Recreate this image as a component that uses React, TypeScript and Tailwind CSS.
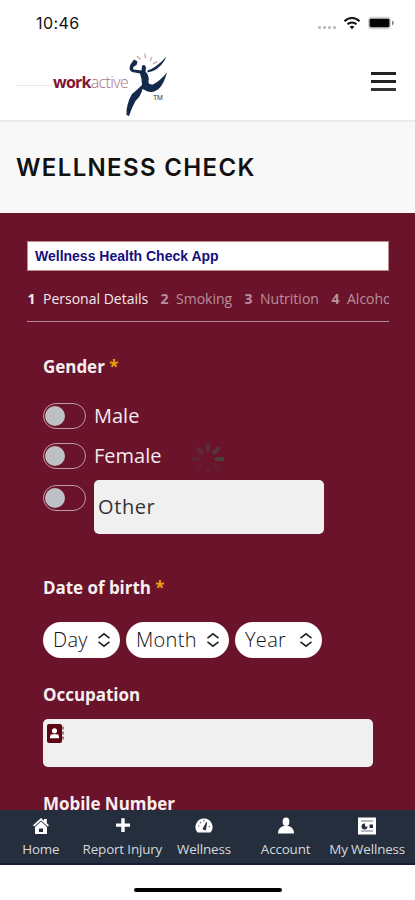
import type { ReactNode } from 'react';

const STEPS = [
  { n: 1, label: 'Personal Details', width: 'w-[133px]', active: true },
  { n: 2, label: 'Smoking', width: 'w-[84px]', active: false },
  { n: 3, label: 'Nutrition', width: 'w-[87px]', active: false },
  { n: 4, label: 'Alcohol', width: 'w-[86px]', active: false },
];

const SPOKES = [0.9, 0.2, 0.2, 0.2, 0.3, 0.5, 0.6, 0.75];

function StatusBar() {
  return (
    <div className="flex h-[45px] items-center pl-[36px] pr-[20px]">
      <span className="flex-1 font-['Inter',sans-serif] text-[16px] leading-5 tracking-[0.4px] text-[#111]">10:46</span>
      <svg className="mr-[6px] mt-[9px]" width="20" height="5" viewBox="0 0 20 5" fill="#b5b5b5">
        <circle cx="2.5" cy="2.5" r="1.5" />
        <circle cx="7.5" cy="2.5" r="1.5" />
        <circle cx="12.5" cy="2.5" r="1.5" />
        <circle cx="17.5" cy="2.5" r="1.5" />
      </svg>
      <svg className="mr-[6px]" width="18" height="14" viewBox="0 0 18 14" fill="none" stroke="#111" strokeWidth="2">
        <path d="M1.5 5.2C5.6.9 12.4.9 16.5 5.2" />
        <path d="M4.5 8.3C7 5.8 11 5.8 13.5 8.3" />
        <path d="M9 13.3 6.6 10.8Q9 8.9 11.4 10.8Z" fill="#111" stroke="none" />
      </svg>
      <svg width="28" height="14" viewBox="0 0 28 14">
        <rect x="1" y="0.7" width="23" height="12.6" rx="3.6" fill="#d3d3d3" />
        <rect x="2.6" y="2.8" width="19.8" height="8.4" rx="1.4" fill="#050505" />
        <path d="M25 4.6v4.8q2-1 2-2.4t-2-2.4z" fill="#8c8c8c" />
      </svg>
    </div>
  );
}

function Logo() {
  return (
    <div className="relative flex h-[66px] w-[154px] items-center">
      <div className="mt-[2px] h-px w-[36px] bg-[#ece6e8]" />
      <span className="-mt-[5px] ml-px font-['Open_Sans',sans-serif] text-[16px] leading-5">
        <b className="tracking-[-0.75px] text-[#7c1533]">work</b>
        <span className="font-light tracking-[-0.65px] text-[#b06f84]">active</span>
      </span>
      {/* leaping figure */}
      <svg className="absolute left-[107px] top-0" width="46" height="66" viewBox="0 0 46 66" fill="#14294b">
        <path d="M11 8.500 14.500 10.500 13.500 14 11 15.500Q9 18 11 18.500L18.500 19.500 19 14.500 21.500 14 23 16.500 22.500 20.500Q26.500 25 25.500 30Q25 34 30 33.500Q37 30 44 21.500Q41 32 37 36.500Q31 43 23.500 40L19.500 38Q18 45 12.500 50Q9 56 6 65L3.500 64Q3 53 9 43Q14 39 19 34L18.500 28 17 22.500 9 21Q5 19 7.500 13.500Z" />
        <path d="M24.500 19.500Q33 17 43.500 5.500Q39 16 30 20L24.500 21.500Z" />
        <path d="M14 5l3.500 3.500M22 2.500l.5 5M29 6l-2 4M34 10.500l-4 2.500" fill="none" stroke="#cf9ba5" strokeWidth="1.2" />
      </svg>
      <span className="absolute left-[137px] top-[43px] font-['Liberation_Sans',sans-serif] text-[7px] leading-[8px] tracking-[-0.3px] text-[#333]">TM</span>
    </div>
  );
}

function Toggle() {
  return (
    <span className="flex h-[26px] w-[43px] shrink-0 items-center rounded-full border border-[#bd9da7] pl-px">
      <span className="size-[20px] rounded-full bg-[#bdc1c5]" />
    </span>
  );
}

function Label({ children, required }: { children: ReactNode; required?: boolean }) {
  return (
    <div className="text-[17px] font-bold leading-6 tracking-[-0.04px] text-[#f6eef0]">
      {children}
      {required && <span className="text-[#eba00f]"> *</span>}
    </div>
  );
}

function DateSelect({ label, className }: { label: string; className: string }) {
  return (
    <div className={`flex h-[36px] items-center justify-between rounded-full bg-white pl-[10px] pr-[9px] text-[20px] font-light tracking-[0.3px] text-[#111] ${className}`}>
      <span>{label}</span>
      <svg width="14" height="16" viewBox="0 0 14 16" fill="none" stroke="#222" strokeWidth="1.6">
        <path d="M1.5 6.2 7 1.8l5.5 4.4M1.5 9.8 7 14.2l5.5-4.4" />
      </svg>
    </div>
  );
}

function NavItem({ label, children }: { label: string; children: ReactNode }) {
  return (
    <div className="flex flex-col items-center pt-[6px]">
      <svg width="20" height="20" viewBox="0 0 20 20" fill="#fff">{children}</svg>
      <span className="mt-[4px] whitespace-nowrap text-[13.4px] leading-[18px] tracking-[-0.15px] text-[#d6d8dc]">{label}</span>
    </div>
  );
}

export default function App() {
  return (
    <div className="flex h-[900px] w-[415px] flex-col overflow-hidden bg-white font-['Open_Sans',sans-serif]">
      <StatusBar />
      <header className="flex h-[75px] items-start justify-between pl-[16px] pr-[19px] pt-[6px]">
        <Logo />
        <div className="mt-[21px] flex w-[25px] flex-col gap-[5.5px]">
          <div className="h-[2.5px] bg-[#222]" />
          <div className="h-[2.5px] bg-[#222]" />
          <div className="h-[2.5px] bg-[#333]" />
        </div>
      </header>

      <div className="flex h-[93px] items-center border-t-2 border-[#ebebeb] bg-[#f8f8f8] pl-[16px]">
        <h1 className="font-['Inter',sans-serif] text-[24px] font-semibold leading-8 tracking-[1.35px] text-[#111]">WELLNESS CHECK</h1>
      </div>

      <main className="relative h-[597px] overflow-hidden bg-[#6a132b] px-[27px] pt-[28px]">
        <div className="flex h-[30px] w-[362px] items-center border border-[#b78e8e] bg-white pl-[7px] font-['Liberation_Sans',sans-serif] text-[14px] font-bold text-[#16107f]">
          Wellness Health Check App
        </div>

        <div className="mt-[17px] flex h-[34px] w-[362px] overflow-hidden border-b border-[#b48a97] pt-px">
          {STEPS.map((s) => (
            <div key={s.n} className={`flex shrink-0 whitespace-nowrap text-[14px] leading-5 ${s.width} ${s.active ? 'text-[#f4e9ec]' : 'text-[#b98f9b]'}`}>
              <b className="w-[16px] shrink-0 pl-[0.5px]">{s.n}</b>
              <span>{s.label}</span>
            </div>
          ))}
        </div>

        <div className="pl-[16px] pt-[33px]">
          <Label required>Gender</Label>
          <div className="mt-[21px] flex h-[32px] items-center gap-[8px] text-[20px] text-[#f4e9ec]">
            <Toggle />
            <span>Male</span>
          </div>
          <div className="mt-[8px] flex h-[32px] items-center gap-[8px] text-[20px] text-[#f4e9ec]">
            <Toggle />
            <span>Female</span>
          </div>
          <div className="mt-[8px] flex items-start gap-[8px]">
            <div className="pt-[5px]">
              <Toggle />
            </div>
            <div className="flex h-[54px] w-[230px] items-center rounded-[5px] bg-[#f0f0f0] pl-[4px] text-[20px] tracking-[0.6px] text-[#333]">Other</div>
          </div>

          <div className="mt-[42px]">
            <Label required>Date of birth</Label>
          </div>
          <div className="mt-[22px] flex gap-[6px]">
            <DateSelect label="Day" className="w-[77px]" />
            <DateSelect label="Month" className="w-[103px]" />
            <DateSelect label="Year" className="w-[87px]" />
          </div>

          <div className="mt-[25px]">
            <Label>Occupation</Label>
          </div>
          <div className="mt-[12px] h-[48px] w-[330px] rounded-[5px] bg-[#f0f0f0] pl-[4px] pt-[5px]">
            <svg width="17" height="19" viewBox="0 0 17 19">
              <rect x="0" y="0" width="15" height="19" rx="2" fill="#5c0714" />
              <path d="M15.500 2.500h1v3h-1zM15.500 7.500h1v3h-1zM15.500 12.500h1v3h-1z" fill="#5c0714" />
              <circle cx="7.500" cy="6.800" r="2.600" fill="#fff" />
              <path d="M3 14.300V12.500Q3 10.300 5.500 10.300H9.500Q12 10.300 12 12.500V14.300Z" fill="#fff" />
            </svg>
          </div>

          <div className="mt-[25px]">
            <Label>Mobile Number</Label>
          </div>
        </div>

        {/* loading spinner over the form */}
        <svg className="absolute left-[190px] top-[228px]" width="36" height="36" viewBox="-18 -18 36 36" stroke="#4c4440" strokeWidth="4" strokeLinecap="round">
          {SPOKES.map((o, i) => (
            <line key={i} x1="8.500" y1="0" x2="14.500" y2="0" opacity={o} transform={`rotate(${i * 45})`} />
          ))}
        </svg>
      </main>

      <nav className="grid h-[55px] grid-cols-5 border-b-2 border-[#151c36] bg-[#252e3c] pr-[7px]">
        <NavItem label="Home">
          <path d="M10 2 2 9.300l1.200 1.300L10 4.600l6.800 6L18 9.300 15.800 7.300V3H13v1.800z" />
          <path fillRule="evenodd" d="M10 5.500 4 11V18h12v-7zM8 12.500h4V16H8z" />
        </NavItem>
        <NavItem label="Report Injury">
          <path d="M9.300 2.200h3.400v5.300h5.300v3.200h-5.300v5.300H9.300v-5.300H4v-3.200h5.300z" />
        </NavItem>
        <NavItem label="Wellness">
          <path d="M10 2.500A8.500 8.500 0 0 0 3.500 16.500h13A8.500 8.500 0 0 0 10 2.500z" />
          <path d="m9 13 3.500-6.500-1 7.500z" fill="#252e3c" stroke="#252e3c" />
          <path d="M4 10h1.500M6 6l1 1M10 4v1.500M14.500 10.500h1.500" stroke="#666d77" strokeWidth="1.200" />
        </NavItem>
        <NavItem label="Account">
          <ellipse cx="10" cy="5.800" rx="3.400" ry="4.200" />
          <path d="M7.500 10h5q5.500 1.500 5.500 7.500H2q0-6 5.500-7.500z" />
        </NavItem>
        <NavItem label="My Wellness">
          <rect x="1" y="1.500" width="18" height="17" />
          <path d="M4 5h12M4 15h12" stroke="#777" />
          <path d="M8 7.500v3h2.500A3 3 0 1 1 8 7.500zM12.500 8.500h3.500v3.500h-3.500z" fill="#252e3c" />
        </NavItem>
      </nav>

      <div className="flex h-[35px] justify-center pt-[23px]">
        <div className="h-[4px] w-[148px] rounded-full bg-black" />
      </div>
    </div>
  );
}
